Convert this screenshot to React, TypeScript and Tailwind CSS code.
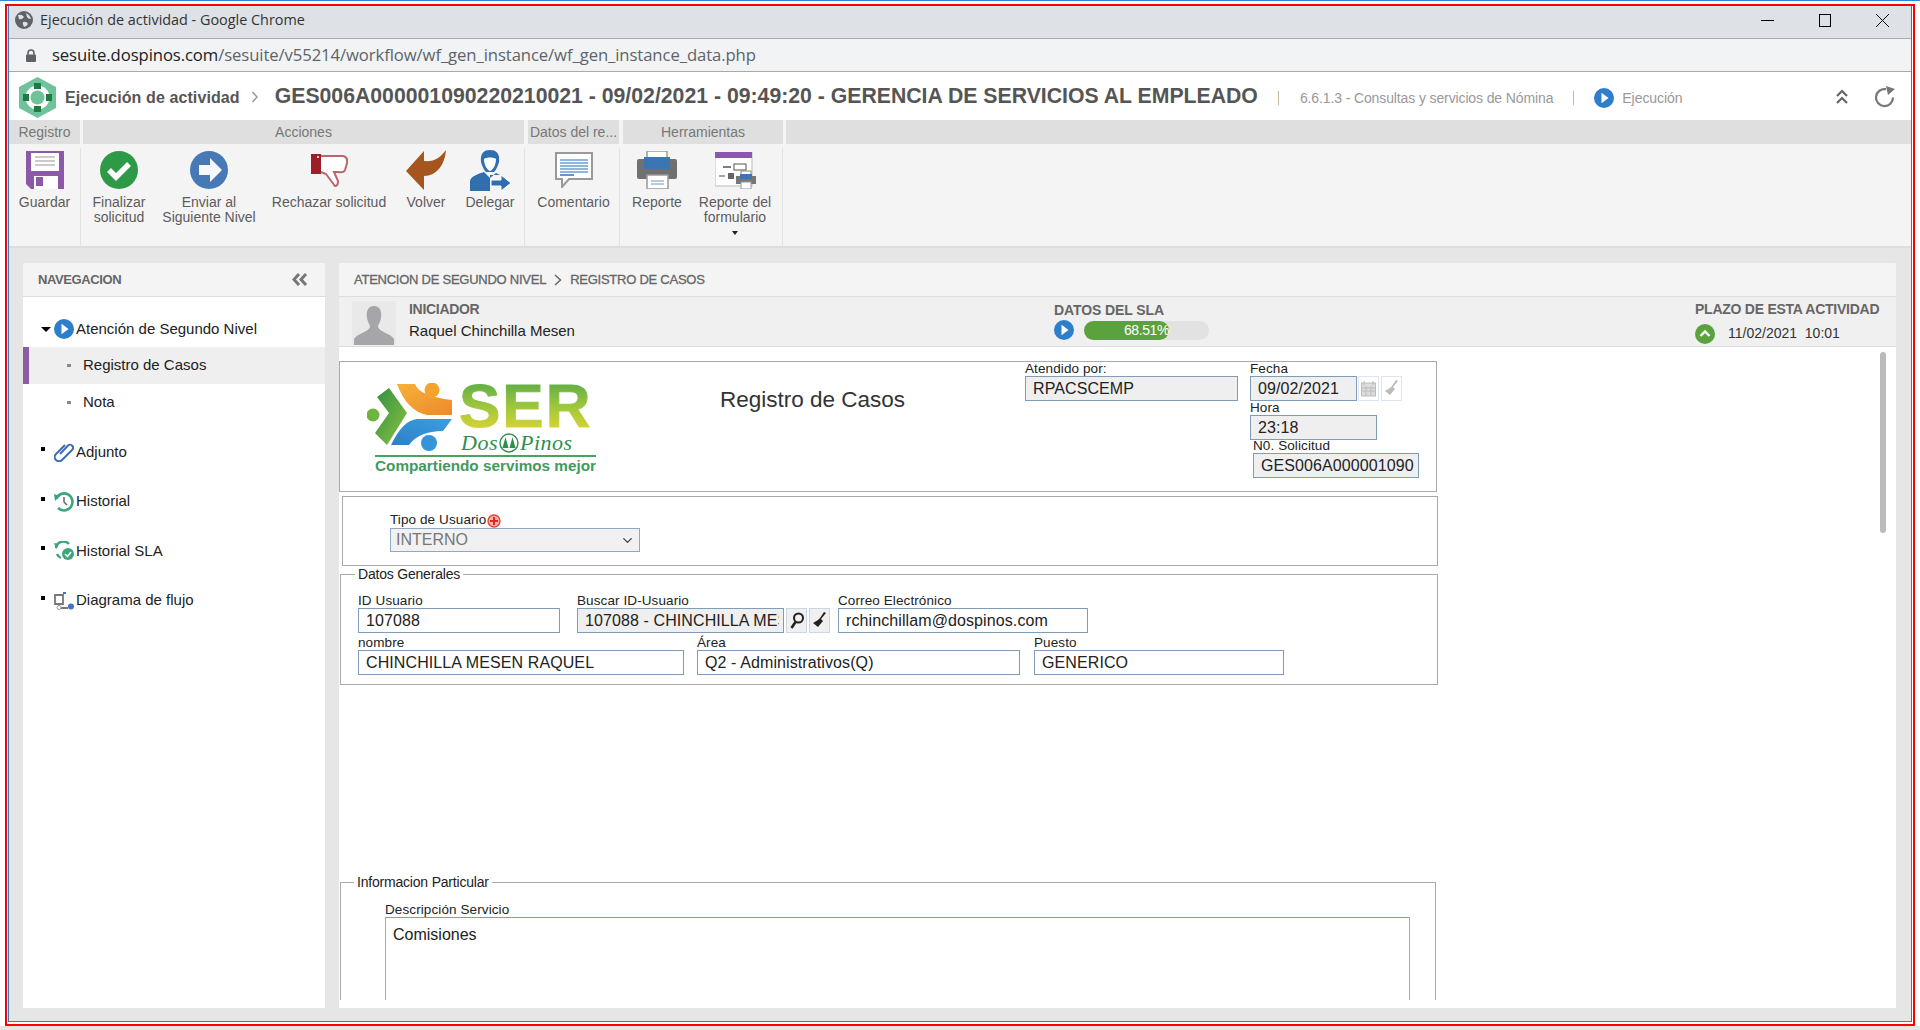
import { ChevronDown } from "lucide-react";
import type { ReactNode } from "react";

function PlayCircle({ size = 20 }: { size?: number }) {
  return (
    <svg width={size} height={size} viewBox="0 0 20 20" className="shrink-0">
      <circle cx="10" cy="10" r="10" fill="#2d7fcb" />
      <path d="M7.5 4.8 L14.5 10 L7.5 15.2 Z" fill="#fff" />
    </svg>
  );
}

function IconSave() {
  return (
    <svg width="38" height="38" viewBox="0 0 38 38">
      <path d="M0 0H38V38H5L0 33Z" fill="#8b59a8" />
      <rect x="5" y="2" width="28" height="18" fill="#fff" />
      <path d="M9 6H29M9 10H29M9 14H29" stroke="#bbb" strokeWidth="1.5" />
      <rect x="8" y="25" width="24" height="13" fill="#fff" />
      <rect x="10" y="26" width="7" height="9" fill="#8b59a8" />
    </svg>
  );
}

function IconCheck() {
  return (
    <svg width="38" height="38" viewBox="0 0 38 38">
      <circle cx="19" cy="19" r="19" fill="#2e9a47" />
      <path d="M9 19 L16 26 L29 13" fill="none" stroke="#fff" strokeWidth="5.5" />
    </svg>
  );
}

function IconSend() {
  return (
    <svg width="38" height="38" viewBox="0 0 38 38">
      <circle cx="19" cy="19" r="19" fill="#4679b5" />
      <path d="M9 14H20V7L32 19L20 31V24H9Z" fill="#f8f8ff" />
    </svg>
  );
}

function IconThumb() {
  return (
    <svg width="38" height="34" viewBox="0 0 38 34">
      <rect x="1" y="1" width="10" height="20" fill="#9a1f27" />
      <circle cx="8" cy="4" r="1" fill="#fff" />
      <path d="M11 3 H33 Q38 4 37 10 L35 17 Q34 20 28 19 H24 L28 28 Q28 33 25 33 L16 21 L11 19" fill="#fff" stroke="#b8676c" strokeWidth="2" />
    </svg>
  );
}

function IconBack() {
  return (
    <svg width="40" height="40" viewBox="0 0 40 40">
      <path d="M0 21 L18 1 V11 C28 12 34 8 40 0 C39 14 31 26 18 26 V40 Z" fill="#a5561e" />
    </svg>
  );
}

function IconDelegate() {
  return (
    <svg width="41" height="41" viewBox="0 0 41 41">
      <path d="M11 12 C10 3 14 0 20 0 C26 0 30 3 29 12 C28 16 26 20 24 22 H16 C14 20 12 16 11 12Z" fill="#2f6fad" />
      <path d="M14 9 C16 7 24 7 26 9 C26 15 23 20 20 21 C17 20 14 15 14 9Z" fill="#fff" />
      <path d="M0 41 V31 C1 26 8 24 14 22 L20 28 L26 23 L30 25 H20 V41Z" fill="#2f6fad" />
      <path d="M21 30 H31 V25 L41 33 L31 41 V36 H21 Z" fill="#2f6fad" stroke="#fff" strokeWidth="1" />
    </svg>
  );
}

function IconComment() {
  return (
    <svg width="38" height="36" viewBox="0 0 38 36">
      <path d="M1 1H37V27H14L7 35V27H1Z" fill="#fff" stroke="#999" strokeWidth="2" />
      <path d="M5 8H33M5 11H33M5 14H33M5 17H33M5 20H33" stroke="#6e9fd4" strokeWidth="1.6" />
      <path d="M5 23H19" stroke="#4679b5" strokeWidth="1.6" />
    </svg>
  );
}

function IconPrinter() {
  return (
    <svg width="40" height="38" viewBox="0 0 40 38">
      <rect x="10" y="0" width="20" height="8" fill="#fff" stroke="#999" strokeWidth="1.5" />
      <rect x="0" y="8" width="40" height="20" rx="2" fill="#707070" />
      <path d="M7 6H33V18H7Z" fill="#3c76b2" />
      <rect x="10" y="24" width="21" height="14" fill="#fff" stroke="#999" strokeWidth="1.5" />
      <path d="M14 30H27M14 33H27" stroke="#9dbbdc" strokeWidth="1.4" />
    </svg>
  );
}

function IconFormReport() {
  return (
    <svg width="41" height="37" viewBox="0 0 41 37">
      <rect x="0" y="0" width="37" height="34" fill="#fff" stroke="#bbb" />
      <rect x="0" y="0" width="37" height="6" fill="#8b59a8" />
      <path d="M8 15H16" stroke="#555" strokeWidth="1.5" />
      <rect x="19" y="12" width="12" height="6" fill="#fff" stroke="#555" />
      <path d="M4 24H10" stroke="#888" strokeWidth="1.5" />
      <rect x="13" y="21" width="6" height="6" fill="#666" />
      <rect x="26" y="19" width="10" height="5" fill="#fff" stroke="#888" />
      <rect x="21" y="24" width="20" height="8" fill="#777" />
      <rect x="25" y="22" width="12" height="5" fill="#3c76b2" />
      <rect x="26" y="30" width="10" height="7" fill="#fff" stroke="#999" />
    </svg>
  );
}

function SerLogo() {
  return (
    <div className="flex w-[229px] flex-col items-stretch">
      <div className="flex h-[72px] items-start">
        <svg width="86" height="68" viewBox="0 0 86 68" className="shrink-0">
          <defs>
            <linearGradient id="or" x1="0" y1="0" x2="1" y2="1">
              <stop offset="0" stopColor="#f6b13a" />
              <stop offset="1" stopColor="#ee8a2a" />
            </linearGradient>
            <linearGradient id="gr" x1="0" y1="0" x2="1" y2="1">
              <stop offset="0" stopColor="#2f8f43" />
              <stop offset="1" stopColor="#8cc43e" />
            </linearGradient>
            <linearGradient id="bl" x1="1" y1="0" x2="0" y2="1">
              <stop offset="0" stopColor="#3aa0e0" />
              <stop offset="1" stopColor="#2f7fc4" />
            </linearGradient>
          </defs>
          <path d="M30 1H48 Q52 13 85 17V32H60Q40 28 30 1Z" fill="url(#or)" />
          <circle cx="65" cy="7" r="7.5" fill="#f4a42e" />
          <path d="M22 5L40 30L20 62L8 50L22 30L10 14Z" fill="url(#gr)" />
          <circle cx="6" cy="32" r="6.5" fill="#6fb43f" />
          <path d="M85 36H50Q36 37 24 62H42Q52 48 76 48Z" fill="url(#bl)" />
          <circle cx="62" cy="60" r="8" fill="#3394dc" />
        </svg>
        <div className="ml-[6px] flex flex-col">
          <span className="bg-gradient-to-b from-[#5fae45] via-[#9cc63c] to-[#d6d433] bg-clip-text text-[62px] leading-[46px] font-bold tracking-[2px] text-transparent [-webkit-text-stroke:1px_transparent]">SER</span>
          <span className="ml-[2px] mt-[4px] flex items-center font-['Liberation_Serif',serif] text-[22px] leading-[20px] tracking-[0.5px] whitespace-nowrap text-[#2f8f4e] italic">
            Dos
            <svg width="20" height="20" viewBox="0 0 20 20" className="mx-[1px]">
              <circle cx="10" cy="10" r="9" fill="none" stroke="#2f8f4e" strokeWidth="1.4" />
              <path d="M6.5 4L3.5 15H9.5ZM13.5 4L10.5 15H16.5Z" fill="#2f8f4e" />
            </svg>
            Pinos
          </span>
        </div>
      </div>
      <div className="ml-[8px] h-[2px] bg-[#4aa363]" />
      <span className="ml-[8px] text-[15.3px] leading-[17px] font-bold whitespace-nowrap text-[#3f9a5c]">Compartiendo servimos mejor</span>
    </div>
  );
}

type RibbonItemProps = {
  label: ReactNode;
  width: string;
  icon: ReactNode;
};

function RibbonItem({ label, width, icon }: RibbonItemProps) {
  return (
    <div className={`flex shrink-0 flex-col items-center ${width}`}>
      <div className="flex h-[44px] items-center justify-center">{icon}</div>
      <div className="mt-[3px] text-center text-[14px] leading-[15px] text-[#5c5c5c]">{label}</div>
    </div>
  );
}

function TreeRow({ children, bullet, icon }: { children: ReactNode; bullet: ReactNode; icon: ReactNode }) {
  return (
    <div className="flex h-[20px] items-center pl-[18px]">
      <span className="flex w-[13px] justify-start">{bullet}</span>
      <span className="flex w-[22px] shrink-0">{icon}</span>
      <span className="text-[15px] whitespace-nowrap text-[#222]">{children}</span>
    </div>
  );
}

const dot = <span className="mb-[6px] block h-[4px] w-[4px] bg-black" />;

function Field({ label, value, width, gray, className }: { label: string; value: string; width: string; gray?: boolean; className?: string }) {
  return (
    <div className={`flex flex-col ${className ?? ""}`}>
      <span className="h-[15px] text-[13.5px] leading-[15px] tracking-[0.1px] whitespace-nowrap text-[#222]">{label}</span>
      <div className={`flex h-[25px] items-center border border-[#7f9db9] pl-[7px] text-[16px] tracking-[0.1px] whitespace-nowrap text-[#222] ${width} ${gray ? "bg-[#efefef]" : "bg-white"}`}>
        <span className="block min-w-0 overflow-hidden">{value}</span>
      </div>
    </div>
  );
}

function Legend({ children, className }: { children: ReactNode; className: string }) {
  return <legend className={`px-[3px] text-[14px] leading-[14px] tracking-[-0.2px] text-[#222] ${className}`}>{children}</legend>;
}

export default function App() {
  return (
    <div className="flex h-[1030px] w-full flex-col overflow-hidden bg-white font-['Liberation_Sans',Arial,sans-serif]">
      <div className="h-[1px] shrink-0 bg-[#2b88d8]" />
      <div className="mx-[5px] mt-[3px] flex h-[1022px] shrink-0 flex-col border-2 border-[#f00] pr-[1px] pb-[2px] pl-[1px]">
        <div className="flex min-h-0 flex-1 flex-col border-r border-b border-l border-[#2b7fc4]">
          {/* Chrome */}
          <div className="flex h-[33px] shrink-0 items-center border-b border-[#aaa] bg-[#dee1e6] pl-[6px]">
            <svg width="18" height="18" viewBox="0 0 18 18" className="mb-[4px]">
              <circle cx="9" cy="9" r="9" fill="#5f6368" />
              <path d="M3 4 Q7 3 9 6 Q7 9 4 8ZM11 2Q15 4 16 8Q13 8 12 6ZM8 11 Q12 10 13 13 Q11 16 9 16Q7 13 8 11Z" fill="#dee1e6" />
            </svg>
            <span className="mb-[4px] ml-[7px] font-['Open_Sans',sans-serif] text-[14.4px] text-[#333]">Ejecución de actividad - Google Chrome</span>
            <div className="mb-[4px] ml-auto flex items-center pr-[21px]">
              <span className="h-[1px] w-[13px] bg-black" />
              <span className="ml-[45px] h-[13px] w-[12px] border border-black" />
              <svg width="15" height="15" viewBox="0 0 15 15" className="ml-[44px]">
                <path d="M1 1L14 14M14 1L1 14" stroke="#000" strokeWidth="1" fill="none" />
              </svg>
            </div>
          </div>
          <div className="flex h-[33px] shrink-0 items-center border-b border-[#aaa] bg-[#f1f3f4] pl-[17px]">
            <svg width="10" height="13" viewBox="0 0 10 13">
              <path d="M2 6V4A3 3 0 0 1 8 4V6" fill="none" stroke="#5f6368" strokeWidth="1.6" />
              <rect x="0" y="5.5" width="10" height="7.5" rx="1" fill="#5f6368" />
            </svg>
            <span className="ml-[16px] font-['Open_Sans',sans-serif] text-[16.7px] tracking-[-0.1px] whitespace-nowrap text-[#5f6368]">
              <span className="text-[#202124]">sesuite.dospinos.com</span>/sesuite/v55214/workflow/wf_gen_instance/wf_gen_instance_data.php
            </span>
          </div>

          {/* App header */}
          <div className="flex h-[48px] shrink-0 items-center bg-white pt-[2px] pl-[10px]">
            <svg width="37" height="41" viewBox="0 0 37 41" className="shrink-0">
              <path d="M18.5 0L37 10V31L18.5 41L0 31V10Z" fill="#6fc39a" />
              <circle cx="18.5" cy="20.5" r="12" fill="#fff" />
              <circle cx="18.5" cy="20.5" r="7" fill="#6fc39a" />
              <path d="M15 6H22V12H15ZM15 29H22V35H15ZM4 17H10V24H4ZM27 17H33V24H27Z" fill="#1f7a45" />
            </svg>
            <span className="mt-[2px] ml-[9px] text-[16px] font-bold tracking-[0.1px] whitespace-nowrap text-[#555]">Ejecución de actividad</span>
            <svg width="8" height="12" viewBox="0 0 8 12" className="ml-[11px] shrink-0">
              <path d="M1.5 1L6 6L1.5 11" fill="none" stroke="#999" strokeWidth="1.5" />
            </svg>
            <span className="mb-[1px] ml-[16px] text-[21.24px] font-bold whitespace-nowrap text-[#555]">GES006A000001090220210021 - 09/02/2021 - 09:49:20 - GERENCIA DE SERVICIOS AL EMPLEADO</span>
            <span className="mt-[2px] ml-[20px] h-[14px] w-[1px] bg-[#c9b8a0]" />
            <span className="mt-[2px] ml-[21px] text-[14px] tracking-[-0.12px] whitespace-nowrap text-[#999]">6.6.1.3 - Consultas y servicios de Nómina</span>
            <span className="mt-[2px] ml-[20px] h-[14px] w-[1px] bg-[#c9b8a0]" />
            <span className="mt-[2px] ml-[20px]">
              <PlayCircle />
            </span>
            <span className="mt-[2px] ml-[8px] text-[14px] tracking-[-0.05px] text-[#999]">Ejecución</span>
            <div className="ml-auto flex items-center pr-[15px]">
              <svg width="14" height="16" viewBox="0 0 14 16">
                <path d="M2 7L7 2L12 7M2 14L7 9L12 14" fill="none" stroke="#666" strokeWidth="2.2" />
              </svg>
              <svg width="23" height="23" viewBox="0 0 23 23" className="ml-[24px]">
                <path d="M20 11.5A8.5 8.5 0 1 1 13 3.2" fill="none" stroke="#777" strokeWidth="2.2" />
                <path d="M13 0L22 3L15 9Z" fill="#777" />
              </svg>
            </div>
          </div>

          {/* Ribbon */}
          <div className="flex h-[24px] shrink-0 gap-[3px] bg-[#f4f4f4] text-center text-[14px] leading-[24px] text-[#777]">
            <span className="w-[71px] bg-[#dfdfdf]">Registro</span>
            <span className="w-[441px] bg-[#dfdfdf]">Acciones</span>
            <span className="ml-[1px] w-[91px] bg-[#dfdfdf]">Datos del re...</span>
            <span className="ml-[1px] w-[160px] bg-[#dfdfdf]">Herramientas</span>
            <span className="flex-1 bg-[#dfdfdf]" />
          </div>
          <div className="flex h-[104px] shrink-0 border-b-2 border-[#ddd] bg-[#f4f4f4] pt-[4px]">
            <div className="flex w-[72px] shrink-0 border-r border-[#e2e2e2]">
              <RibbonItem width="w-[71px]" icon={<IconSave />} label="Guardar" />
            </div>
            <div className="flex w-[444px] shrink-0 border-r border-[#e2e2e2] pl-[2px]">
              <RibbonItem width="w-[72px]" icon={<IconCheck />} label={<>Finalizar<br />solicitud</>} />
              <RibbonItem width="w-[108px]" icon={<IconSend />} label={<>Enviar al<br />Siguiente Nivel</>} />
              <RibbonItem width="w-[132px]" icon={<IconThumb />} label="Rechazar solicitud" />
              <RibbonItem width="w-[62px]" icon={<IconBack />} label="Volver" />
              <RibbonItem width="w-[66px]" icon={<IconDelegate />} label="Delegar" />
            </div>
            <div className="flex w-[95px] shrink-0 border-r border-[#e2e2e2] pl-[3px]">
              <RibbonItem width="w-[91px]" icon={<IconComment />} label="Comentario" />
            </div>
            <div className="flex w-[163px] shrink-0 border-r border-[#e2e2e2] pl-[3px]">
              <RibbonItem width="w-[68px]" icon={<IconPrinter />} label="Reporte" />
              <div className="flex w-[88px] flex-col items-center">
                <RibbonItem width="w-[88px]" icon={<IconFormReport />} label={<>Reporte del<br />formulario</>} />
                <span className="mt-[6px] h-0 w-0 border-x-[3.5px] border-t-[4px] border-x-transparent border-t-[#222]" />
              </div>
            </div>
          </div>

          {/* Content */}
          <div className="flex min-h-0 flex-1 gap-[14px] bg-[#e6e6e6] pt-[15px] pr-[15px] pb-[13px] pl-[14px]">
            {/* Sidebar */}
            <aside className="flex w-[302px] shrink-0 flex-col rounded-t-[3px] bg-white">
              <div className="flex h-[34px] shrink-0 items-center justify-between rounded-t-[3px] border-b border-[#ddd] bg-[#f4f4f4] pr-[17px] pl-[15px]">
                <span className="text-[13px] font-bold tracking-[-0.4px] text-[#666]">NAVEGACION</span>
                <svg width="16" height="13" viewBox="0 0 16 13">
                  <path d="M7 1L2 6.5L7 12M14 1L9 6.5L14 12" fill="none" stroke="#777" strokeWidth="3" />
                </svg>
              </div>
              <div className="flex flex-col pt-[22px]">
                <TreeRow bullet={<span className="h-0 w-0 border-x-[5px] border-t-[5px] border-x-transparent border-t-black" />} icon={<PlayCircle />}>
                  Atención de Segundo Nivel
                </TreeRow>
                <div className="mt-[8px] flex h-[37px] items-center border-l-[6px] border-[#8e5ba6] bg-[#efefef] pl-[38px]">
                  <span className="mr-[12px] h-[3px] w-[4px] bg-[#888]" />
                  <span className="text-[15px] text-[#222]">Registro de Casos</span>
                </div>
                <div className="flex h-[37px] items-center pl-[44px]">
                  <span className="mr-[12px] h-[3px] w-[4px] bg-[#888]" />
                  <span className="text-[15px] text-[#222]">Nota</span>
                </div>
                <div className="mt-[21px] flex flex-col gap-[29.5px]">
                  <TreeRow
                    bullet={dot}
                    icon={
                      <svg width="20" height="20" viewBox="0 0 20 20">
                        <path d="M6 12L14 3.5A3 3 0 0 1 18 8L8 18A4 4 0 0 1 2 12L11 3" fill="none" stroke="#3d6fb5" strokeWidth="2" />
                      </svg>
                    }
                  >
                    Adjunto
                  </TreeRow>
                  <TreeRow
                    bullet={dot}
                    icon={
                      <svg width="20" height="20" viewBox="0 0 20 20">
                        <path d="M2 7A8.5 8.5 0 1 1 4 16" fill="none" stroke="#3ba57b" strokeWidth="2.6" />
                        <path d="M0 2L6 4L1 9Z" fill="#3ba57b" />
                        <path d="M10 5V10L13 13" fill="none" stroke="#666" strokeWidth="1.5" />
                      </svg>
                    }
                  >
                    Historial
                  </TreeRow>
                  <TreeRow
                    bullet={dot}
                    icon={
                      <svg width="20" height="20" viewBox="0 0 20 20">
                        <path d="M2 7A7.5 7.5 0 0 1 15 3M3 13A8 8 0 0 0 7 17" fill="none" stroke="#3ba57b" strokeWidth="2.4" />
                        <path d="M0 2L5 3L2 8Z" fill="#3ba57b" />
                        <circle cx="14" cy="13" r="6" fill="#3ba57b" />
                        <path d="M11 13L13.5 15.5L17 11" fill="none" stroke="#fff" strokeWidth="1.6" />
                      </svg>
                    }
                  >
                    Historial SLA
                  </TreeRow>
                  <TreeRow
                    bullet={dot}
                    icon={
                      <svg width="20" height="18" viewBox="0 0 20 18">
                        <path d="M1 3H9V12H1ZM5 12V16H14" fill="none" stroke="#777" strokeWidth="1.8" />
                        <path d="M9 1H12" stroke="#3d78c4" strokeWidth="2" />
                        <circle cx="5" cy="15.5" r="2" fill="#fff" stroke="#999" />
                        <circle cx="17" cy="14.5" r="3" fill="#3d78c4" />
                      </svg>
                    }
                  >
                    Diagrama de flujo
                  </TreeRow>
                </div>
              </div>
            </aside>

            {/* Main */}
            <main className="flex min-w-0 flex-1 flex-col rounded-t-[3px] bg-white pb-[8px]">
              <div className="flex h-[34px] shrink-0 items-center gap-[8px] rounded-t-[3px] border-b border-[#ddd] bg-[#f4f4f4] pl-[15px] text-[13px] tracking-[-0.25px] text-[#666] [-webkit-text-stroke:0.3px_#666]">
                <span>ATENCION DE SEGUNDO NIVEL</span>
                <svg width="8" height="12" viewBox="0 0 8 12">
                  <path d="M1 1L6.5 6L1 11" fill="none" stroke="#666" strokeWidth="1.5" />
                </svg>
                <span>REGISTRO DE CASOS</span>
              </div>
              <div className="flex h-[50px] shrink-0 border-b border-[#ddd] bg-[#f0f0f0] pr-[14px] pl-[13px]">
                <div className="mt-[4px] flex h-[44px] w-[44px] shrink-0 items-end justify-center overflow-hidden bg-[#e9e9e9]">
                  <svg width="42" height="39" viewBox="0 0 42 39">
                    <path d="M21 0C27 0 29 5 28 12C27 17 25 19 25 21C27 26 37 27 41 33V39H1V33C5 27 15 26 17 21C17 19 15 17 14 12C13 5 15 0 21 0Z" fill="#a6a6aa" />
                  </svg>
                </div>
                <div className="ml-[13px] flex w-[645px] shrink-0 flex-col pt-[3px]">
                  <span className="text-[14px] leading-[18px] font-bold tracking-[-0.3px] text-[#666]">INICIADOR</span>
                  <span className="mt-[4px] text-[15px] leading-[18px] text-[#222]">Raquel Chinchilla Mesen</span>
                </div>
                <div className="flex w-[641px] shrink-0 flex-col pt-[5px]">
                  <span className="text-[14px] leading-[16px] font-bold tracking-[-0.1px] text-[#666]">DATOS DEL SLA</span>
                  <div className="mt-[2px] flex items-center gap-[10px]">
                    <PlayCircle />
                    <div className="relative h-[19px] w-[125px] rounded-full bg-[#e2e2e2]">
                      <div className="flex h-full w-[85px] items-center justify-end rounded-full bg-[#5ba23f] text-[14px] tracking-[-0.4px] text-white">68.51%</div>
                    </div>
                  </div>
                </div>
                <div className="flex flex-col pt-[3px]">
                  <span className="text-[14px] leading-[18px] font-bold tracking-[-0.25px] whitespace-nowrap text-[#666]">PLAZO DE ESTA ACTIVIDAD</span>
                  <div className="mt-[5px] flex items-center gap-[13px]">
                    <svg width="20" height="20" viewBox="0 0 20 20">
                      <circle cx="10" cy="10" r="10" fill="#5ba23f" />
                      <path d="M5.5 12L10 7.5L14.5 12" fill="none" stroke="#fff" strokeWidth="2.4" />
                    </svg>
                    <span className="text-[14px] whitespace-nowrap text-[#333]">11/02/2021&nbsp; 10:01</span>
                  </div>
                </div>
              </div>

              <div className="relative min-h-0 flex-1 overflow-hidden pt-[14px]">
                <span className="absolute top-[5px] right-[10px] h-[181px] w-[6px] rounded-full bg-[#bbb]" />

                {/* Cabecera */}
                <section className="flex h-[131px] w-[1098px] border border-[#aaa]">
                  <div className="mt-[21px] ml-[27px]">
                    <SerLogo />
                  </div>
                  <h1 className="mt-[23px] ml-[124px] w-[305px] shrink-0 text-[22.5px] leading-[30px] font-normal text-[#333]">Registro de Casos</h1>
                  <Field className="mt-[-1px]" label="Atendido por:" value="RPACSCEMP" width="w-[213px]" gray />
                  <div className="mt-[-1px] ml-[12px] flex flex-col">
                    <div className="flex items-end">
                      <Field label="Fecha" value="09/02/2021" width="w-[107px]" gray />
                      <span className="ml-[1px] flex h-[25px] w-[21px] items-center justify-center border border-[#dfe5ee]">
                        <svg width="15" height="17" viewBox="0 0 15 17">
                          <rect x="0.5" y="3" width="14" height="13" fill="#ddd" stroke="#bbb" />
                          <path d="M3 1V5M12 1V5M1 8H14M1 11H14M5 6V16M10 6V16" stroke="#bbb" />
                        </svg>
                      </span>
                      <span className="ml-[2px] flex h-[25px] w-[21px] items-center justify-center border border-[#dfe5ee]">
                        <svg width="15" height="17" viewBox="0 0 15 17">
                          <path d="M14 1L9 7L11 9L6 15L1 11L6 8L8 6L12 0Z" fill="#bbb" />
                        </svg>
                      </span>
                    </div>
                    <Field className="-mt-[1px]" label="Hora" value="23:18" width="w-[127px]" gray />
                    <Field className="ml-[3px] -mt-[2px]" label="N0. Solicitud" value="GES006A000001090220210021" width="w-[166px] pr-[4px]" gray />
                  </div>
                </section>

                {/* Tipo de usuario */}
                <section className="mt-[4px] ml-[3px] h-[70px] w-[1096px] border border-[#aaa] pt-[16px] pl-[47px]">
                  <div className="flex h-[15px] items-center gap-[1px] text-[13.5px] tracking-[0.1px] text-[#222]">
                    Tipo de Usuario
                    <svg width="14" height="14" viewBox="0 0 14 14">
                      <circle cx="7" cy="7" r="6" fill="#f8b4b0" stroke="#e0453a" strokeWidth="1.4" />
                      <path d="M7 3V11M3 7H11" stroke="#e0281c" strokeWidth="2" />
                    </svg>
                  </div>
                  <div className="flex h-[24px] w-[250px] items-center justify-between border border-[#8fa8c4] bg-[#f1f1f1] pr-[4px] pl-[5px] text-[16px] text-[#777]">
                    INTERNO
                    <ChevronDown size={15} strokeWidth={2.2} color="#444" />
                  </div>
                </section>

                {/* Datos generales */}
                <fieldset className="mt-[1px] ml-[1px] h-[118px] w-[1098px] border border-[#aaa] pl-[17px]">
                  <Legend className="-ml-[3px]">Datos Generales</Legend>
                  <div className="mt-[12px] flex">
                    <Field label="ID Usuario" value="107088" width="w-[202px]" />
                    <div className="ml-[17px] flex items-end">
                      <Field label="Buscar ID-Usuario" value="107088 - CHINCHILLA MESEN RAQUEL" width="w-[207px] pr-[4px]" gray />
                      <span className="ml-[2px] flex h-[25px] w-[21px] items-center justify-center border border-[#c9d6e6] bg-[#f0f0f0]">
                        <svg width="14" height="18" viewBox="0 0 14 18">
                          <circle cx="8.5" cy="6" r="4.5" fill="none" stroke="#222" strokeWidth="2" />
                          <path d="M5.5 10L1.5 16" stroke="#222" strokeWidth="2.6" />
                        </svg>
                      </span>
                      <span className="ml-[2px] flex h-[25px] w-[21px] items-center justify-center border border-[#c9d6e6] bg-[#f0f0f0]">
                        <svg width="15" height="17" viewBox="0 0 15 17">
                          <path d="M14 1L9 7L11 9L6 15L1 11L6 8L8 6L12 0Z" fill="#222" />
                        </svg>
                      </span>
                    </div>
                    <Field className="ml-[8px]" label="Correo Electrónico" value="rchinchillam@dospinos.com" width="w-[250px]" />
                  </div>
                  <div className="mt-[2px] flex">
                    <Field label="nombre" value="CHINCHILLA MESEN RAQUEL" width="w-[326px]" />
                    <Field className="ml-[13px]" label="Área" value="Q2 - Administrativos(Q)" width="w-[323px]" />
                    <Field className="ml-[14px]" label="Puesto" value="GENERICO" width="w-[250px]" />
                  </div>
                </fieldset>

                {/* Informacion particular */}
                <fieldset className="mt-[190px] ml-[1px] h-[200px] w-[1096px] border border-[#aaa] pl-[44px]">
                  <Legend className="-ml-[31px]">Informacion Particular</Legend>
                  <div className="mt-[13px] h-[15px] text-[13.5px] leading-[15px] tracking-[0.1px] text-[#222]">Descripción Servicio</div>
                  <div className="h-[120px] w-[1025px] border border-[#aaa] border-t-[#7f9db9] px-[7px] pt-[5px] text-[16px] text-[#222]">Comisiones</div>
                </fieldset>
              </div>
            </main>
          </div>
        </div>
      </div>
      <div className="flex-1 bg-[#e6e6e6]" />
    </div>
  );
}
